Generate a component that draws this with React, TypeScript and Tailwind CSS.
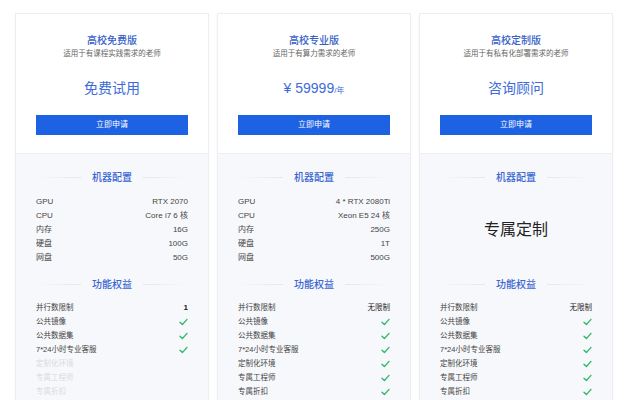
const FONT = { fontFamily: '"Liberation Sans", "Noto Sans CJK SC", sans-serif' }

type Plan = {
  name: string
  desc: string
  price: React.ReactNode
  specs: [string, string][] | null
  limit: string
  features: boolean[]
}

const featureNames = ['公共镜像', '公共数据集', '7*24小时专业客服', '定制化环境', '专属工程师', '专属折扣']

const plans: Plan[] = [
  {
    name: '高校免费版',
    desc: '适用于有课程实践需求的老师',
    price: <span className="text-[14px]">免费试用</span>,
    specs: [
      ['GPU', 'RTX 2070'],
      ['CPU', 'Core i7 6 核'],
      ['内存', '16G'],
      ['硬盘', '100G'],
      ['网盘', '50G'],
    ],
    limit: '1',
    features: [true, true, true, false, false, false],
  },
  {
    name: '高校专业版',
    desc: '适用于有算力需求的老师',
    price: (
      <span className="text-[14px]">
        ¥ 59999<span className="text-[8px]">/年</span>
      </span>
    ),
    specs: [
      ['GPU', '4 * RTX 2080Ti'],
      ['CPU', 'Xeon E5 24 核'],
      ['内存', '250G'],
      ['硬盘', '1T'],
      ['网盘', '500G'],
    ],
    limit: '无限制',
    features: [true, true, true, true, true, true],
  },
  {
    name: '高校定制版',
    desc: '适用于有私有化部署需求的老师',
    price: <span className="text-[14px]">咨询顾问</span>,
    specs: null,
    limit: '无限制',
    features: [true, true, true, true, true, true],
  },
]

function Check() {
  return (
    <svg width="9" height="8" viewBox="0 0 9 8" fill="none">
      <path d="M1 4.2 L3.4 6.6 L8 1.4" stroke="#2fb86a" strokeWidth="1.4" strokeLinecap="round" strokeLinejoin="round" />
    </svg>
  )
}

function Heading({ text }: { text: string }) {
  return (
    <div className="flex items-center h-[14px]">
      <div className="flex-1 h-px bg-gradient-to-r from-transparent to-[#e3e7ef]" />
      <span className="px-[11px] text-[10px] font-medium text-[#3a66d2]">{text}</span>
      <div className="flex-1 h-px bg-gradient-to-l from-transparent to-[#e3e7ef]" />
    </div>
  )
}

function Card({ plan }: { plan: Plan }) {
  return (
    <div className="border border-[#eceef2] shadow-[0_0_4px_rgba(0,0,0,0.03)] bg-white">
      <div className="flex flex-col items-center pt-[20px] pb-[18px] px-[20px]">
        <div className="text-[10px] leading-[14px] font-medium text-[#3560c8]">{plan.name}</div>
        <div className="text-[7.5px] leading-[12px] text-[#666]">{plan.desc}</div>
        <div className="mt-[18px] h-[20px] leading-[20px] text-[#3d6bd8]">{plan.price}</div>
        <button className="mt-[17px] w-full h-[20px] bg-[#1d62e3] text-white text-[8px]">立即申请</button>
      </div>
      <div className="bg-[#f7f8fb] border-t border-[#eceef2] px-[20px] pt-[16px] pb-[20px]">
        <Heading text="机器配置" />
        {plan.specs ? (
          <div className="mt-[11px]">
            {plan.specs.map(([k, v]) => (
              <div key={k} className="flex justify-between h-[14px] items-center text-[8px] text-[#444]">
                <span>{k}</span>
                <span>{v}</span>
              </div>
            ))}
          </div>
        ) : (
          <div className="mt-[11px] h-[70px] flex items-center justify-center text-[16px] text-[#222]">专属定制</div>
        )}
        <div className="mt-[12px]">
          <Heading text="功能权益" />
        </div>
        <div className="mt-[10px]">
          <div className="flex justify-between h-[14px] items-center text-[7.5px] text-[#444]">
            <span>并行数限制</span>
            <span className={plan.limit === '1' ? 'font-bold text-[8px] text-[#222]' : 'text-[#222]'}>{plan.limit}</span>
          </div>
          {featureNames.map((f, i) => (
            <div key={f} className="flex justify-between h-[14px] items-center text-[7.5px]">
              <span className={plan.features[i] ? 'text-[#444]' : 'text-[#d9dbe0]'}>{f}</span>
              {plan.features[i] && <Check />}
            </div>
          ))}
        </div>
      </div>
    </div>
  )
}

export default function App() {
  return (
    <div className="bg-white min-h-screen pt-[13px] pl-[15px] pr-[18px]" style={FONT}>
      <div className="grid grid-cols-3 gap-[8px]">
        {plans.map((p) => (
          <Card key={p.name} plan={p} />
        ))}
      </div>
    </div>
  )
}
